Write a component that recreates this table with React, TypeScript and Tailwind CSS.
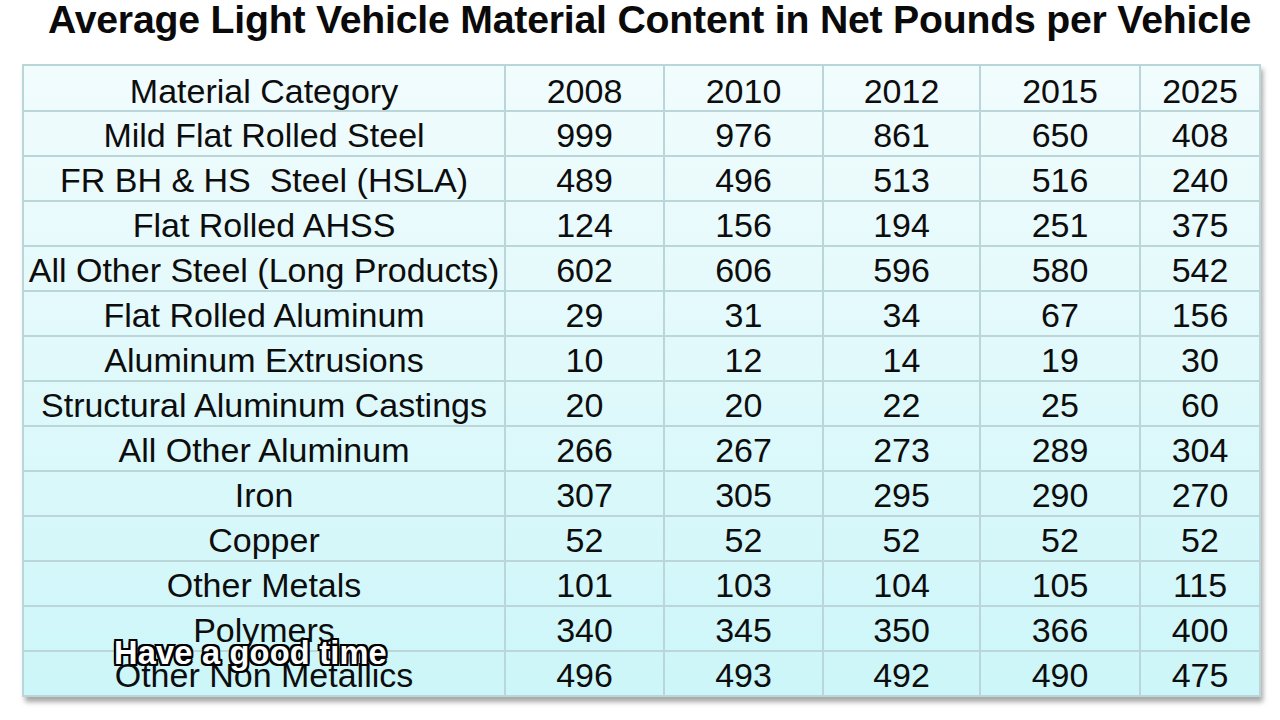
const YEARS = ['2008', '2010', '2012', '2015', '2025']

const ROWS: [string, number[]][] = [
  ['Mild Flat Rolled Steel', [999, 976, 861, 650, 408]],
  ['FR BH & HS  Steel (HSLA)', [489, 496, 513, 516, 240]],
  ['Flat Rolled AHSS', [124, 156, 194, 251, 375]],
  ['All Other Steel (Long Products)', [602, 606, 596, 580, 542]],
  ['Flat Rolled Aluminum', [29, 31, 34, 67, 156]],
  ['Aluminum Extrusions', [10, 12, 14, 19, 30]],
  ['Structural Aluminum Castings', [20, 20, 22, 25, 60]],
  ['All Other Aluminum', [266, 267, 273, 289, 304]],
  ['Iron', [307, 305, 295, 290, 270]],
  ['Copper', [52, 52, 52, 52, 52]],
  ['Other Metals', [101, 103, 104, 105, 115]],
  ['Polymers', [340, 345, 350, 366, 400]],
  ['Other Non Metallics', [496, 493, 492, 490, 475]],
]

const COL_W = ['w-[482px]', 'w-[159px]', 'w-[159px]', 'w-[157px]', 'w-[160px]', 'w-[120px]']

export default function App() {
  return (
    <div className="relative w-[1280px] h-[720px] overflow-hidden bg-white font-['Liberation_Sans',Arial,sans-serif] text-[#0d0d0d]">
      <div className="pt-px">
        <h1 className="-mt-[3px] h-[44px] pl-[48px] text-[39.2px] leading-[44px] font-bold tracking-[-0.2px] text-[#0a0a0a] whitespace-nowrap">
          Average Light Vehicle Material Content in Net Pounds per Vehicle
        </h1>
      </div>

      <div className="ml-[22px] mt-[22px] w-[1238px] shadow-[3px_5px_5px_rgba(0,0,0,0.35)]">
        <table className="w-[1238px] table-fixed border-collapse bg-gradient-to-b from-[#f1fcfd] via-[#e0f9fb] to-[#ccf6f9] text-[34px] leading-none">
          <colgroup>
            {COL_W.map((w, i) => <col key={i} className={w} />)}
          </colgroup>
          <thead>
            <tr className="h-[46px]">
              <th className="border-2 border-[#bad6d9] font-normal text-center pt-[6px]">Material Category</th>
              {YEARS.map(y => (
                <th key={y} className="border-2 border-[#bad6d9] font-normal text-center pt-[6px]">{y}</th>
              ))}
            </tr>
          </thead>
          <tbody>
            {ROWS.map(([name, vals]) => (
              <tr key={name} className="h-[45px]">
                <td className="border-2 border-[#bad6d9] text-center whitespace-pre pt-[2px]">{name}</td>
                {vals.map((v, i) => (
                  <td key={i} className="border-2 border-[#bad6d9] text-center pt-[2px]">{v}</td>
                ))}
              </tr>
            ))}
          </tbody>
        </table>
      </div>

      {/* caption burned into the video frame */}
      <div className="absolute left-[114px] top-[637px] text-[32.6px] leading-none font-bold text-white tracking-[0.2px] [text-shadow:-2px_-2px_0_#000,2px_-2px_0_#000,-2px_2px_0_#000,2px_2px_0_#000,0_-2px_0_#000,0_2px_0_#000,-2px_0_0_#000,2px_0_0_#000]">
        Have a good time
      </div>
    </div>
  )
}
